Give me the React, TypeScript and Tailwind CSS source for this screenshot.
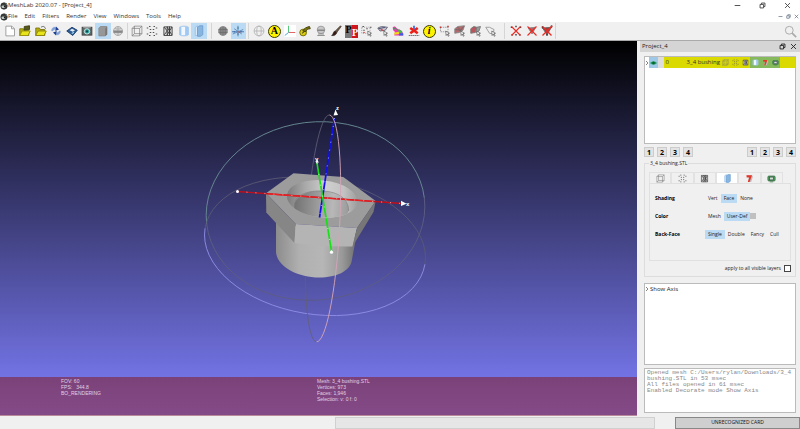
import React from "react";

type IconProps = { className?: string };

const Svg = ({ children, className = "size-3" }: { children: React.ReactNode; className?: string }) => (
  <svg viewBox="0 0 16 16" className={`${className} shrink-0`} fill="none" stroke="#555" strokeWidth="1.2" aria-hidden="true">
    {children}
  </svg>
);

const AppLogo = ({ className = "size-2" }: IconProps) => (
  <Svg className={className}>
    <circle cx="8" cy="8" r="6.500" fill="#3a3f3c" stroke="#222" />
    <ellipse cx="6.500" cy="9.500" rx="3.600" ry="2.600" fill="#c4cec8" stroke="none" />
    <circle cx="9" cy="9" r="1.300" fill="#1c1c1c" stroke="none" />
    <path d="M11 3l3 3" stroke="#9aa" />
  </Svg>
);

const NewDoc = () => (
  <Svg>
    <path d="M2.500 1.500h8L14 5v9.500H2.500z" fill="#fff" stroke="#999" />
    <path d="M10 1.500V5h3.500" stroke="#999" />
  </Svg>
);
const FolderCube = () => (
  <Svg>
    <path d="M1 5h5l1 2h6v7H1z" fill="#b5ab10" stroke="#7d760a" />
    <path d="M7 2l7-1v5l-7 1z" fill="#55571c" stroke="#3c3d14" />
    <path d="M1 14l3-6h11l-3 6z" fill="#e8e41c" stroke="#99920c" />
  </Svg>
);
const FolderOpen = () => (
  <Svg>
    <path d="M1 4h5l1 2h6v8H1z" fill="#b5ab10" stroke="#7d760a" />
    <path d="M1 14l3-6h11l-3 6z" fill="#e8e41c" stroke="#8a830c" />
    <path d="M8 3c3-2 5-1 6 2" stroke="#555" />
  </Svg>
);
const Reload = () => (
  <Svg>
    <path d="M2 8c0-4 3-6 6-5l-1 3c-2 0-3 1-3 2z" fill="#7f9fd6" stroke="#9db2dc" strokeWidth="0.600" />
    <path d="M8 2l4 4-5 2z" fill="#1f3f92" stroke="none" />
    <path d="M14 8c0 4-3 6-6 5l1-3c2 0 3-1 3-2z" fill="#7f9fd6" stroke="#9db2dc" strokeWidth="0.600" />
    <path d="M8 14L4 10l5-2z" fill="#1f3f92" stroke="none" />
  </Svg>
);
const SaveMesh = () => (
  <Svg>
    <path d="M1 8l7-5 7 4-6 7z" fill="#2d5e95" stroke="#183b65" />
    <path d="M5 7l3-2 4 2-3 2z" fill="#e7eef5" stroke="none" />
    <path d="M7 11l3-2 1 1-2 2z" fill="#9fd0ee" stroke="none" />
  </Svg>
);
const Camera = () => (
  <Svg>
    <rect x="1.500" y="3" width="13" height="10.500" fill="#5d6666" stroke="#3b4242" />
    <path d="M3 3.500h10" stroke="#aaa" />
    <circle cx="8" cy="8.500" r="3.600" fill="#2aa7a2" stroke="#d6e8e8" />
    <circle cx="8" cy="8.500" r="1.500" fill="#11484a" stroke="none" />
  </Svg>
);
const SolidBox = () => (
  <Svg>
    <path d="M2.500 4l2-2H13v10.500l-2 2H2.500z" fill="#979797" stroke="#8c8c8c" />
    <path d="M11 4.500v10l2.500-2V2z" fill="#777" stroke="none" />
  </Svg>
);
const RasterGlobe = () => (
  <Svg>
    <circle cx="8" cy="8" r="6" fill="#d5d5d5" stroke="#aaa" />
    <path d="M2 8h12M8 2v12M4 4c2 2 6 2 8 0" stroke="#aaa" />
    <path d="M2 7.500h12v3H2z" fill="#888" stroke="none" />
  </Svg>
);
const WireBox = ({ className }: IconProps) => (
  <Svg className={className}>
    <path d="M1.500 4.500h10v10h-10zM4.500 1.500h10v10h-10zM1.500 4.500l3-3M11.500 4.500l3-3M11.500 14.500l3-3M1.500 14.500l3-3" stroke="#777" strokeWidth="0.900" />
  </Svg>
);
const Points = ({ className }: IconProps) => (
  <Svg className={className}>
    <path d="M1 4h2M4 2h2M10 2h2M13 4h2M5 6h2M9 6h2M1 12h2M4 14h2M10 14h2M13 12h2M5 10h2M9 10h2" stroke="#555" strokeWidth="1.400" />
  </Svg>
);
const WireCyl = ({ className }: IconProps) => (
  <Svg className={className}>
    <path d="M2.500 2.500h11v11.500h-11z" fill="#ddd" stroke="#444" />
    <path d="M3 3l4 5-4 5M7 2v12M7 3l3 5-3 5M10 2v12M13 3l-3 5 3 5" stroke="#333" />
  </Svg>
);
const FlatCyl = ({ className }: IconProps) => (
  <Svg className={className}>
    <path d="M2 3c2-2 10-2 12 0v10c-2 2-10 2-12 0z" fill="#9fc8f4" stroke="#a5c9ee" />
    <path d="M4.500 2.500h5v11h-5z" fill="#f2f8ff" stroke="none" />
  </Svg>
);
const FlatCylDark = ({ className }: IconProps) => (
  <Svg className={className}>
    <path d="M3 3l3-2v13H3z" fill="#d8eafa" stroke="#9bc0e6" />
    <path d="M6 3l3-2h4v12l-3 2H6z" fill="#88b4e0" stroke="#6f9fd0" />
  </Svg>
);
const GreyBall = () => (
  <Svg>
    <circle cx="8" cy="8" r="6" fill="#8a8a8a" stroke="#999" />
    <path d="M2 6h12M2 10h12M8 2v12M5 3v10M11 3v10" stroke="#666" strokeWidth="0.800" />
  </Svg>
);
const AxisToggle = () => (
  <Svg>
    <path d="M0 9h16" stroke="#3f6fae" />
    <path d="M8 1v14" stroke="#4a86a8" />
    <path d="M1 12l14-6M3 5l10 7" stroke="#5b88b8" />
    <path d="M3 8v2M12 8v2M7 4h2M7 12h2" stroke="#3f5f9e" />
    <path d="M8 9l3 1" stroke="#b06070" strokeWidth="1.600" />
  </Svg>
);
const WireGlobe = () => (
  <Svg>
    <circle cx="8" cy="8" r="6.500" stroke="#b5b5b5" />
    <ellipse cx="8" cy="8" rx="3" ry="6.500" stroke="#b5b5b5" />
    <path d="M1.500 8h13" stroke="#b5b5b5" />
  </Svg>
);
const Badge = ({ letter, italic }: { letter: string; italic?: boolean }) => (
  <span
    className={`flex size-[13px] shrink-0 items-center justify-center rounded-full border border-[#3a3a00] bg-[#fff200] font-['Liberation_Serif',serif] text-[10px] leading-none font-bold text-black ${italic ? "italic" : ""}`}
  >
    {letter}
  </span>
);
const Axes = () => (
  <Svg>
    <rect x="0" y="0" width="16" height="16" fill="#fff" stroke="none" />
    <path d="M6 1v9" stroke="#3cc46b" />
    <path d="M6 10h9" stroke="#e05555" />
    <path d="M6 10l-5 4" stroke="#35a6dc" />
  </Svg>
);
const Tape = () => (
  <Svg>
    <circle cx="5.500" cy="10" r="4.500" fill="#d9cc10" stroke="#6e6605" />
    <path d="M5 8c2-4 5-5 9-6l1 3c-3 0-5 1-6 4z" fill="#77730c" stroke="#3f3d05" />
    <path d="M4 11l3-2" stroke="#333" />
  </Svg>
);
const Turntable = () => (
  <Svg>
    <circle cx="8" cy="6.500" r="5" fill="#c8c8c8" stroke="#999" />
    <path d="M3 6h10v2H3z" fill="#888" stroke="none" />
    <path d="M3 14h10M4 12h8" stroke="#888" />
  </Svg>
);
const Brush = () => (
  <Svg>
    <path d="M14 1L7 8l2 2 6-8z" fill="#6b5a4a" stroke="#3a2c20" strokeWidth="0.800" />
    <path d="M7 8c-3 0-2 4-5 6 3 1 7-1 7-4z" fill="#3a1d10" stroke="#222" strokeWidth="0.600" />
  </Svg>
);
const PickPoints = () => (
  <span className="flex size-[13px] shrink-0 justify-around overflow-hidden bg-[linear-gradient(90deg,#777_50%,#d0151c_50%)] font-['Liberation_Serif',serif] text-[10px] leading-none font-bold">
    <span className="text-black">P</span>
    <span className="pt-[3px] text-white">P</span>
  </span>
);
const Cursor = () => <path d="M9 8l5 3-2 .5 1.500 3-1.200.5-1.300-3L9.500 14z" fill="#fff" stroke="#555" strokeWidth="0.900" />;
const SelectVerts = () => (
  <Svg>
    <path d="M1 3h11v8H1z" stroke="#999" strokeDasharray="1.500 1.500" />
    <circle cx="4" cy="10" r="1" fill="#c33" stroke="none" />
    <path d="M2 2h2M7 5h2M3 7h2M12 3h2" stroke="#444" />
    <Cursor />
  </Svg>
);
const SelectCluster = () => (
  <Svg>
    <path d="M1 4l5-2 8 1-3 4-7 1z" fill="#c3c5d2" stroke="#667" />
    <path d="M2 5l9-2" stroke="#557" strokeWidth="1.500" />
    <path d="M5 6l3 1" stroke="#c33" strokeWidth="1.500" />
    <Cursor />
  </Svg>
);
const Bunny = () => (
  <Svg>
    <path d="M1 3c2-2 4-1 5 1l3 2c3 0 6 3 6 8H3l1-5C2 9 1 6 1 3z" fill="#e63bb0" stroke="none" />
    <path d="M8 6c3 0 5 2 6 4l-5 1z" fill="#39c24a" stroke="none" />
    <path d="M3 10l6-1 1 3-7 1z" fill="#f2d21c" stroke="none" />
    <path d="M10 11h5v3H9z" fill="#3a5ee0" stroke="none" />
    <path d="M2 4l4 2" stroke="#2fae4a" strokeWidth="1.800" />
  </Svg>
);
const Georef = () => (
  <Svg>
    <path d="M3 4l10 7M13 4L3 11" stroke="#ec2017" strokeWidth="3.600" />
    <path d="M8 1v5" stroke="#3b6de0" strokeWidth="2.400" />
    <path d="M1 14h14" stroke="#777" strokeWidth="1.600" strokeDasharray="2 0.600" />
  </Svg>
);
const SelectRect = () => (
  <Svg>
    <path d="M2 3h10v6H2z" stroke="#999" strokeDasharray="2 1" />
    <path d="M1 3h2M11 2h2" stroke="#b33" strokeWidth="2" />
    <Cursor />
  </Svg>
);
const SelectFaces = () => (
  <Svg>
    <path d="M1 5l4-3 9-1-2 6-5 3-6 1z" fill="#b8676b" stroke="#888" />
    <path d="M2 6l7 1M13 2L8 8M5 3l4 4" stroke="#666" />
    <Cursor />
  </Svg>
);
const SelectConn = () => (
  <Svg>
    <path d="M1 5l4-3 4 1-2 7-6 1z" fill="#b8565b" stroke="#777" />
    <path d="M9 3l5-1-2 6-4 2z" fill="#999" stroke="#777" />
    <Cursor />
  </Svg>
);
const SelectPoly = () => (
  <Svg>
    <path d="M1 3h5l6 3-1 6-5-1z" stroke="#999" />
    <Cursor />
  </Svg>
);
const DeleteVerts = () => (
  <Svg>
    <path d="M1 3h2M7 2h2M13 3h2M2 13h2M12 13h2M7 13h2" stroke="#444" strokeWidth="1.800" />
    <path d="M2 2l12 12M14 2L2 14" stroke="#ee2a22" strokeWidth="1.500" />
  </Svg>
);
const DeleteFaces = () => (
  <Svg>
    <path d="M3 4l10-1-5 9z" fill="#a7686c" stroke="#888" />
    <path d="M2 2l12 12M14 2L2 14" stroke="#ee2a22" strokeWidth="1.500" />
  </Svg>
);
const DeleteBoth = () => (
  <Svg>
    <path d="M2 4l12-1-6 10z" fill="#8d4246" stroke="#666" />
    <path d="M1 3h2M13 2h2M7 13h2" stroke="#333" strokeWidth="2.400" />
    <path d="M2 2l12 12M15 1L2 14" stroke="#ee2a22" strokeWidth="1.800" />
  </Svg>
);
const EdgeRed = ({ className }: IconProps) => (
  <Svg className={className}>
    <path d="M3 2h10l1 3-3 9H5l2-8z" fill="#c2bcbc" stroke="none" />
    <path d="M2.500 2h10L8 14H5l2.500-8H3z" fill="#e0392b" stroke="none" />
  </Svg>
);
const GreenBox = ({ className }: IconProps) => (
  <Svg className={className}>
    <rect x="1.500" y="3.500" width="13" height="9" rx="2" fill="#4d9c5c" stroke="#376b41" />
    <rect x="4.500" y="5.500" width="7" height="5" fill="#cfe2d2" stroke="#445" />
    <path d="M5 14h6" stroke="#376b41" />
  </Svg>
);
const Chevron = () => (
  <svg viewBox="0 0 4 6" className="h-[6px] w-1 shrink-0" fill="none" stroke="#777" strokeWidth="0.900" aria-hidden="true">
    <path d="M1 1l2 2-2 2" />
  </svg>
);
const RestoreGlyph = ({ className = "size-[7px]" }: IconProps) => (
  <svg viewBox="0 0 10 10" className={`${className} shrink-0`} fill="none" stroke="currentColor" strokeWidth="1.300" aria-hidden="true">
    <path d="M1.500 3.500h5v5h-5zM3.500 3V1.500h5v5H7" />
  </svg>
);
const CloseGlyph = ({ className = "size-[7px]" }: IconProps) => (
  <svg viewBox="0 0 10 10" className={`${className} shrink-0`} fill="none" stroke="currentColor" strokeWidth="1.300" aria-hidden="true">
    <path d="M1.500 1.500l7 7M8.500 1.500l-7 7" />
  </svg>
);
const MinGlyph = ({ className = "size-[7px]" }: IconProps) => (
  <svg viewBox="0 0 10 10" className={`${className} shrink-0`} fill="none" stroke="currentColor" strokeWidth="1.300" aria-hidden="true">
    <path d="M1 5h8" />
  </svg>
);

type Tool = { label: string; icon: React.ReactNode; on?: boolean };

const fileTools: Tool[] = [
  { label: "New project", icon: <NewDoc /> },
  { label: "Open project", icon: <FolderCube /> },
  { label: "Import mesh", icon: <FolderOpen /> },
  { label: "Reload", icon: <Reload /> },
  { label: "Export mesh", icon: <SaveMesh /> },
  { label: "Snapshot", icon: <Camera /> },
  { label: "Layer dialog", icon: <SolidBox />, on: true },
  { label: "Raster mode", icon: <RasterGlobe /> },
];
const drawTools: Tool[] = [
  { label: "Bounding box", icon: <WireBox /> },
  { label: "Points", icon: <Points /> },
  { label: "Wireframe", icon: <WireCyl /> },
  { label: "Smooth", icon: <FlatCyl /> },
  { label: "Flat", icon: <FlatCylDark />, on: true },
];
const decorTools: Tool[] = [
  { label: "Texture", icon: <GreyBall /> },
  { label: "Show axis", icon: <AxisToggle />, on: true },
];
const editTools: Tool[] = [
  { label: "Trackball", icon: <WireGlobe /> },
  { label: "Align", icon: <Badge letter="A" /> },
  { label: "Manipulators", icon: <Axes /> },
  { label: "Measure", icon: <Tape /> },
  { label: "Raster alignment", icon: <Turntable /> },
  { label: "Paint", icon: <Brush /> },
  { label: "Pick points", icon: <PickPoints /> },
  { label: "Select vertices", icon: <SelectVerts /> },
  { label: "Select clusters", icon: <SelectCluster /> },
  { label: "Quality mapper", icon: <Bunny /> },
  { label: "Georeference", icon: <Georef /> },
  { label: "Info", icon: <Badge letter="i" italic /> },
  { label: "Select rectangle", icon: <SelectRect /> },
  { label: "Select faces", icon: <SelectFaces /> },
  { label: "Select connected", icon: <SelectConn /> },
  { label: "Select polyline", icon: <SelectPoly /> },
];
const deleteTools: Tool[] = [
  { label: "Delete vertices", icon: <DeleteVerts /> },
  { label: "Delete faces", icon: <DeleteFaces /> },
  { label: "Delete faces and vertices", icon: <DeleteBoth /> },
];

const ToolGroup = ({ tools, className }: { tools: Tool[]; className: string }) => (
  <div className={`flex h-full ${className}`}>
    {tools.map((t) => (
      <button
        key={t.label}
        type="button"
        aria-label={t.label}
        aria-pressed={t.on}
        className={`flex min-w-0 flex-1 items-center justify-center ${t.on ? "bg-[#bbdaf3]" : ""}`}
      >
        {t.icon}
      </button>
    ))}
  </div>
);

const Scene = () => (
  <svg viewBox="0 41 637 336" className="min-h-0 w-full flex-1" fill="none" role="img" aria-label="3D view">
    <defs>
      <linearGradient id="body" x1="276" x2="354" y1="0" y2="0" gradientUnits="userSpaceOnUse">
        <stop offset="0" stopColor="#8c8c8c" />
        <stop offset="0.300" stopColor="#b0b0b0" />
        <stop offset="0.600" stopColor="#b6b6b6" />
        <stop offset="0.850" stopColor="#999" />
        <stop offset="1" stopColor="#757575" />
      </linearGradient>
      <linearGradient id="rim" x1="287" x2="358" y1="0" y2="0" gradientUnits="userSpaceOnUse">
        <stop offset="0" stopColor="#7c7c7c" />
        <stop offset="0.250" stopColor="#a8a8a8" />
        <stop offset="0.550" stopColor="#cfcfcf" />
        <stop offset="0.800" stopColor="#c2c2c2" />
        <stop offset="1" stopColor="#9c9c9c" />
      </linearGradient>
      <linearGradient id="bore" x1="294" x2="349" y1="0" y2="0" gradientUnits="userSpaceOnUse">
        <stop offset="0" stopColor="#727272" />
        <stop offset="0.350" stopColor="#949494" />
        <stop offset="0.700" stopColor="#b8b8b8" />
        <stop offset="1" stopColor="#9a9a9a" />
      </linearGradient>
      <clipPath id="hole">
        <ellipse cx="322.200" cy="198.800" rx="35.500" ry="18.500" transform="rotate(6 322.200 198.800)" />
      </clipPath>
    </defs>

    <g transform="translate(315.500 211) rotate(-6.900)">
      <path d="M-109.600 0A109.600 89 0 0 0 109.600 0" stroke="#5c5c83" strokeWidth="0.900" />
      <path d="M-109.600 0A109.600 89 0 0 1 109.600 0" stroke="#688a92" strokeWidth="0.900" />
    </g>
    <g transform="translate(315 246.300) rotate(9.300)">
      <path d="M-111.400 0A111.400 67.800 0 0 1 111.400 0" stroke="#5a5a74" strokeWidth="0.800" />
      <path d="M-111.400 0A111.400 67.800 0 0 0 111.400 0" stroke="#8c8ce4" strokeWidth="0.900" />
    </g>
    <path
      transform="translate(323 228.400) rotate(-86.750)"
      d="M-113.600 0A113.600 16.500 0 0 1 113.600 0"
      stroke="#625f75"
      strokeWidth="0.800"
    />

    <path d="M276 222V252C277 267 298 277.500 319 277.500C337 277.500 349 271 351.500 262L356 238Z" fill="url(#body)" />
    <path d="M293.500 173.300L343.300 177L375.700 201L357 228L295.700 224L266 193.300Z" fill="#9c9c9c" />
    <path d="M266 193.300L295.700 224L294.500 243L266.300 212.500Z" fill="#868686" />
    <path d="M295.700 224L357 228L352.500 246.500Q322 247 294.500 243Z" fill="#b4b4b4" />
    <path d="M357 228L375.700 201L373.500 212L352.500 246.500Z" fill="#777" />
    <g clipPath="url(#hole)">
      <path d="M284 176h76v46h-76z" fill="url(#rim)" />
      <ellipse cx="321.300" cy="208" rx="27.200" ry="17" fill="url(#bore)" transform="rotate(4 321.300 208)" />
      <path d="M294.500 207C293 194 310 190.500 322 191C338 191.500 349 199 348.500 211" stroke="#808080" strokeWidth="0.700" />
    </g>

    <path d="M237.500 191.500L402 203.500" stroke="#c00f1c" strokeWidth="1.400" />
    <path d="M268 193.800L374 201.500" stroke="#ee2222" strokeWidth="1.200" />
    <path d="M237.500 191.500L402 203.500" stroke="#f1a0a0" strokeWidth="1" strokeDasharray="1 8" />
    <path d="M334.500 118L319.500 217.500" stroke="#1010e6" strokeWidth="1.700" />
    <path d="M334.500 118L319.500 217.500" stroke="#a9a9ff" strokeWidth="1" strokeDasharray="1 7" />
    <path d="M317 163L331.500 251" stroke="#16e016" strokeWidth="1.600" />
    <path d="M317 163L331.500 251" stroke="#b0ffb0" strokeWidth="1" strokeDasharray="1 10" />
    <path d="M401 200.800L406.500 203.800L401 206Z" fill="#fff" />
    <path d="M333.500 115.500L335.500 109.500L338 115Z" fill="#fff" />
    <path d="M315.800 163L317 159L318.800 162.500Z" fill="#fff" />
    <circle cx="237.500" cy="191.500" r="1.500" fill="#fff" />
    <circle cx="331.500" cy="252.200" r="1.600" fill="#fff" />
    <path
      transform="translate(323 228.400) rotate(-86.750)"
      d="M-113.600 0A113.600 16.500 0 0 0 113.600 0"
      stroke="#d3a5b8"
      strokeWidth="0.900"
    />
    <g className="fill-white font-['Liberation_Sans',sans-serif] text-[6px] font-bold">
      <text x="406" y="206">x</text>
      <text x="315" y="161">y</text>
      <text x="336" y="110">z</text>
    </g>
  </svg>
);

const boxIcons = [
  { key: "box", icon: <WireBox className="size-[7px]" />, on: false },
  { key: "pts", icon: <Points className="size-[7px]" />, on: false },
  { key: "wire", icon: <WireCyl className="size-[7px]" />, on: false },
  { key: "solid", icon: <FlatCyl className="size-[7px]" />, on: true },
  { key: "edge", icon: <EdgeRed className="size-[7px]" />, on: true },
  { key: "ras", icon: <GreenBox className="size-[7px]" />, on: true },
];

const tabs = [
  { label: "Box", icon: <WireBox className="size-[9px]" /> },
  { label: "Points", icon: <Points className="size-[9px]" /> },
  { label: "Wireframe", icon: <WireCyl className="size-[9px]" /> },
  { label: "Solid", icon: <FlatCylDark className="size-[9px]" /> },
  { label: "Selection", icon: <EdgeRed className="size-[9px]" /> },
  { label: "Decorators", icon: <GreenBox className="size-[9px]" /> },
];

const options = [
  { name: "Shading", values: ["Vert", "Face", "None"], active: "Face" },
  { name: "Color", values: ["Mesh", "User-Def"], active: "User-Def" },
  { name: "Back-Face", values: ["Single", "Double", "Fancy", "Cull"], active: "Single" },
];

const Presets = () => (
  <div className="flex gap-[3px]">
    {["1", "2", "3", "4"].map((n) => (
      <button
        key={n}
        type="button"
        className="flex size-[10px] items-center justify-center border border-[#ccc] bg-[#e3e3e3] text-[7px] leading-none font-bold text-black"
      >
        {n}
      </button>
    ))}
  </div>
);

const SidePanel = () => (
  <aside className="flex w-[163px] shrink-0 flex-col bg-[#f0f0f0] pl-[3px]">
    <header className="flex h-[11px] shrink-0 items-center justify-between bg-[#d5d5d5] pr-[3px] pl-0.5 text-[6px] text-[#222]">
      <h2>Project_4</h2>
      <div className="flex gap-1">
        <button type="button" aria-label="Float panel"><RestoreGlyph /></button>
        <button type="button" aria-label="Close panel"><CloseGlyph /></button>
      </div>
    </header>

    <div className="flex min-h-0 flex-1 flex-col px-1 pt-1">
      <div className="min-h-[60px] flex-[89] border border-[#bbb] bg-white">
        <div className="flex h-[11px] items-center">
          <Chevron />
          <button type="button" aria-label="Toggle visibility" className="flex h-full w-[9px] items-center justify-center bg-[#9fc8e6]">
            <svg viewBox="0 0 8 6" className="h-[6px] w-[7px]" aria-hidden="true">
              <path d="M0 3Q4-1 8 3Q4 7 0 3Z" fill="#1f9a55" />
              <circle cx="4" cy="3" r="1.500" fill="#063" />
            </svg>
          </button>
          <span className="h-full w-[6px] bg-[#ddd]" />
          <div className="flex h-full flex-1 items-center bg-[#dada00] pl-[2px] text-[6px] text-[#333]">
            <span className="w-[21px]">0</span>
            <span className="flex-1 whitespace-nowrap">3_4 bushing</span>
            <span className="mr-[15px] flex h-full">
              {boxIcons.map((b) => (
                <span key={b.key} className={`flex h-full w-[10px] items-center justify-center ${b.on ? "bg-[#86b95c]" : ""}`}>
                  {b.icon}
                </span>
              ))}
            </span>
          </div>
        </div>
      </div>

      <div className="mt-[3px] flex justify-between">
        <Presets />
        <Presets />
      </div>

      <fieldset className="mt-[2px] shrink-0 border border-[#ddd] px-1 pt-[5px]">
        <legend className="px-px text-[5px] leading-[8px] text-[#222]">3_4 bushing.STL</legend>
        <div role="tablist" className="mr-2 flex">
          {tabs.map((t) => (
            <button
              key={t.label}
              type="button"
              role="tab"
              aria-label={t.label}
              aria-selected={t.label === "Solid"}
              className={`flex h-[11px] flex-1 items-center justify-center border-x border-t border-[#e2e2e2] ${t.label === "Solid" ? "bg-white" : ""}`}
            >
              {t.icon}
            </button>
          ))}
        </div>
        <div className="h-[78px] border border-[#e0e0e0] pt-[5px] pl-[5px]">
          {options.map((o) => (
            <div key={o.name} className="flex h-[18px] items-center text-[#222]">
              <span className="w-[50px] text-[5px] font-bold text-black">{o.name}</span>
              {o.values.map((v) => (
                <button
                  key={v}
                  type="button"
                  aria-pressed={v === o.active}
                  className={`h-[9px] px-[3px] text-[5px] leading-[9px] ${v === o.active ? "bg-[#bbdaf3]" : ""}`}
                >
                  {v}
                </button>
              ))}
              {o.name === "Color" && <span className="size-[6px] bg-[#c0c0c0]" />}
            </div>
          ))}
        </div>
        <label className="flex h-[15px] items-center justify-end gap-[3px] text-[5px] text-[#222]">
          apply to all visible layers
          <input type="checkbox" className="size-[7px] appearance-none border border-[#444] bg-white" />
        </label>
      </fieldset>

      <div className="mt-[6px] flex min-h-[40px] flex-[81] items-start gap-px border border-[#bbb] bg-white pt-px">
        <span className="flex h-[8px] items-center"><Chevron /></span>
        <span className="text-[6px] leading-[8px] text-[#222]">Show Axis</span>
      </div>

      <div className="mt-[3px] mb-[3px] h-[45px] shrink-0 border border-[#bbb] bg-white px-[2px] pt-px font-['Liberation_Mono',monospace] text-[6px] leading-[6px] whitespace-pre text-[#888]">
        {"Opened mesh C:/Users/rylan/Downloads/3_4\nbushing.STL in 53 msec\nAll files opened in 61 msec\nEnabled Decorate mode Show Axis"}
      </div>
    </div>
  </aside>
);

export default function App() {
  return (
    <div className="flex h-screen flex-col overflow-hidden bg-[#f0f0f0] font-['Open_Sans','Noto_Sans',sans-serif] text-[6px] text-[#333]">
      <div className="flex h-[11px] shrink-0 items-center bg-white">
        <AppLogo />
        <h1>MeshLab 2020.07 - [Project_4]</h1>
        <div className="mr-[9px] ml-auto flex gap-[18px] text-[#444]">
          <button type="button" aria-label="Minimize"><MinGlyph /></button>
          <button type="button" aria-label="Restore"><RestoreGlyph /></button>
          <button type="button" aria-label="Close"><CloseGlyph /></button>
        </div>
      </div>

      <div className="flex h-[11px] shrink-0 items-center bg-white">
        <AppLogo />
        <nav className="flex gap-[7px]">
          {["File", "Edit", "Filters", "Render", "View", "Windows", "Tools", "Help"].map((m) => (
            <button key={m} type="button">{m}</button>
          ))}
        </nav>
        <div className="mr-px ml-auto flex gap-[3px] text-[#567]">
          <button type="button" aria-label="Minimize document"><MinGlyph className="size-[5px]" /></button>
          <button type="button" aria-label="Restore document"><RestoreGlyph className="size-[5px]" /></button>
          <button type="button" aria-label="Close document"><CloseGlyph className="size-[5px]" /></button>
        </div>
      </div>

      <div className="flex h-[19px] shrink-0 items-center border-b border-[#aaa] bg-[#f0f0f0] py-px pl-0.5">
        <ToolGroup tools={fileTools} className="w-[124px]" />
        <ToolGroup tools={drawTools} className="ml-px w-[80px] border-l border-[#d5d5d5] pl-px" />
        <ToolGroup tools={decorTools} className="ml-1 w-[35px] border-l border-[#d5d5d5] pl-[3px]" />
        <ToolGroup tools={editTools} className="ml-0.5 w-[251px] border-l border-[#d5d5d5] pl-0.5" />
        <ToolGroup tools={deleteTools} className="ml-[5px] w-[52px] border-x border-[#d5d5d5] pl-[3px]" />
        <button type="button" aria-label="Search" className="mr-[3px] ml-auto">
          <Svg className="size-[13px]">
            <circle cx="6.500" cy="6.500" r="4.800" stroke="#aaa" />
            <path d="M10 10l5 5" stroke="#aaa" strokeWidth="2" />
          </Svg>
        </button>
      </div>

      <main className="flex min-h-0 flex-1">
        <section className="flex min-w-0 flex-1 flex-col bg-[linear-gradient(to_bottom,#000,#8080ff)]">
          <Scene />
          <div className="flex h-[39px] shrink-0 border-b border-[#b98a9c] bg-[linear-gradient(to_bottom,#7b4279,#834a88)] pt-px pr-[3px] font-['Liberation_Sans',sans-serif] text-[5px] leading-[6px] text-[#e0d2e6]">
            <div className="w-1/2 pl-[61px] whitespace-pre">{"FOV: 60\nFPS:   344.8\nBO_RENDERING"}</div>
            <div className="w-1/2 whitespace-pre">{"Mesh: 3_4 bushing.STL\nVertices: 973\nFaces: 1,946\nSelection: v: 0 f: 0"}</div>
          </div>
        </section>
        <SidePanel />
      </main>

      <footer className="flex h-[13px] shrink-0 items-stretch justify-end gap-5 pt-px">
        <div className="w-2/5 border border-[#d0d0d0] bg-[#e6e6e6]" />
        <div className="flex w-[125px] items-center justify-center border border-[#888] bg-[#cfcfcf] text-[5px] text-[#111]">UNRECOGNIZED CARD</div>
      </footer>
    </div>
  );
}
